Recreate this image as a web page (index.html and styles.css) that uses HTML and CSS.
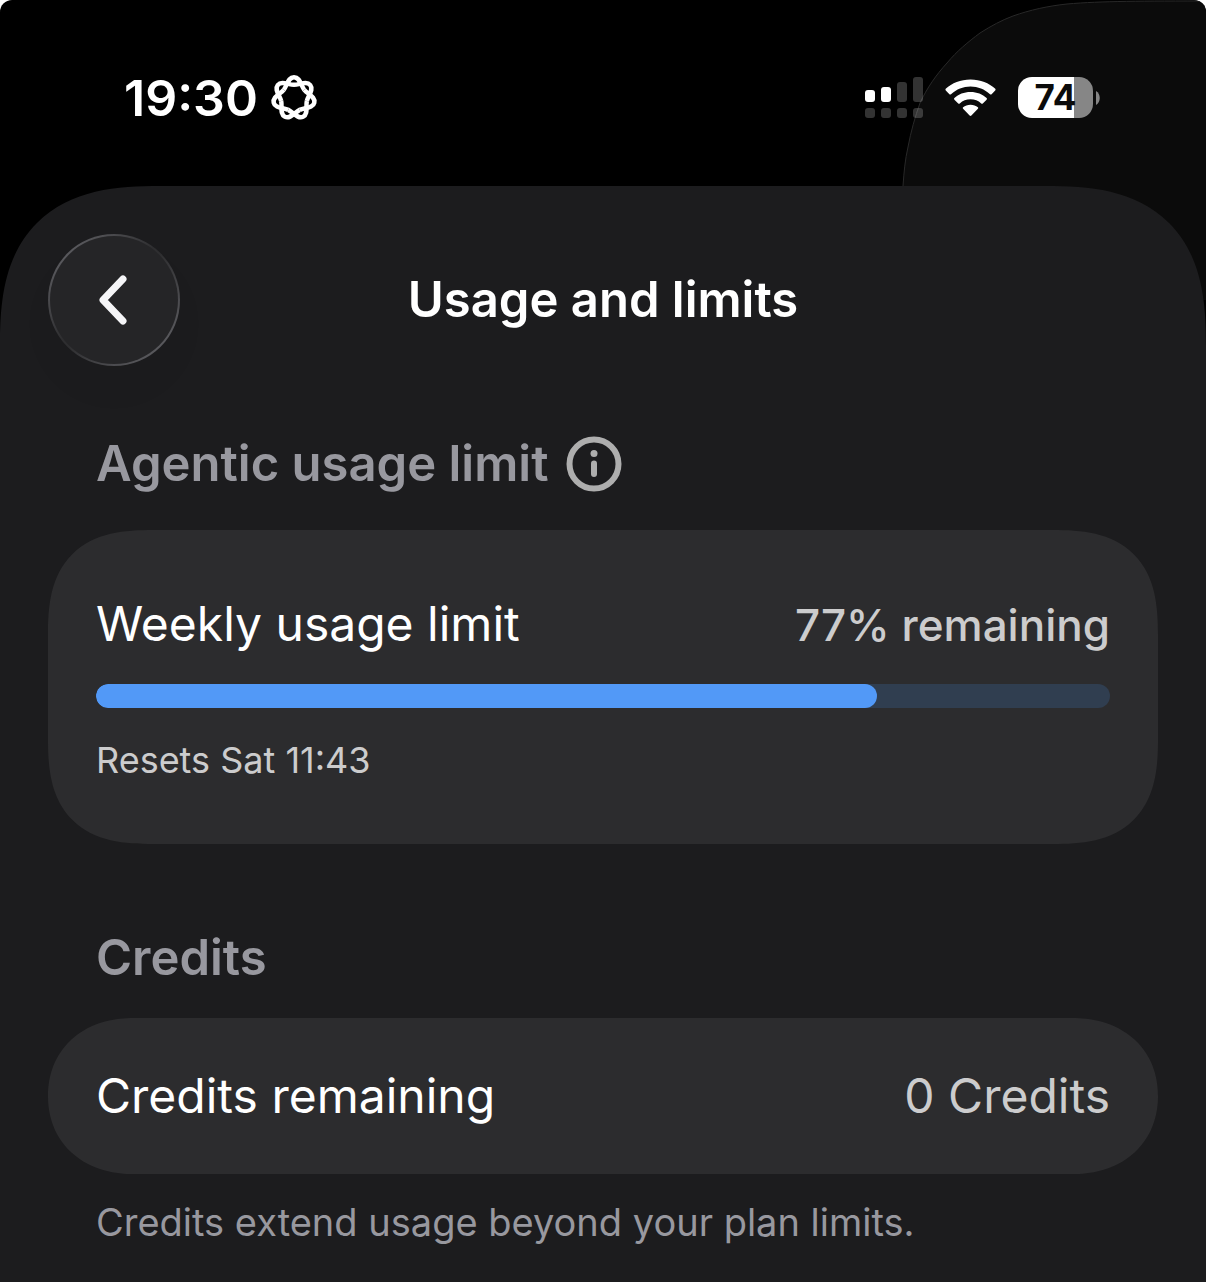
FILE: index.html
```html
<!DOCTYPE html>
<html lang="en">

<head>
    <meta charset="UTF-8">
    <meta name="viewport" content="width=device-width, initial-scale=1.0">
    <title>Usage and limits</title>
    <link rel="stylesheet" href="styles.css">
</head>

<body>
    <div class="screen">
        <div class="status-bar">
            <!-- Edge of the view behind the sheet -->
            <svg class="backdrop" viewBox="0 0 304 300" aria-hidden="true">
                <path d="M1 310V186C2 172 3 160 6 147C9 131 13 117 18 103C25 88 34 75 45 63C55 51 66 42 78 33C89 26 100 20 111 16C128 10 146 6 165 4C200 1 240 1 310 1V310Z" />
            </svg>
            <div class="status-left">
                <span class="time">19:30</span>
                <svg class="knot" viewBox="-24 -24 48 48" aria-hidden="true">
                    <defs>
                        <path id="loop" d="M-10.300 -8.200C-6.800 -12.600 -6 -20.800 0 -20.800S6.800 -12.600 10.300 -8.200" />
                    </defs>
                    <use href="#loop" />
                    <use href="#loop" transform="rotate(51.43)" />
                    <use href="#loop" transform="rotate(102.86)" />
                    <use href="#loop" transform="rotate(154.29)" />
                    <use href="#loop" transform="rotate(205.71)" />
                    <use href="#loop" transform="rotate(257.14)" />
                    <use href="#loop" transform="rotate(308.57)" />
                </svg>
            </div>
            <div class="status-right">
                <svg class="signal" viewBox="0 0 58 41" aria-hidden="true">
                    <g fill="#fff">
                        <rect x="0" y="13" width="10" height="12" rx="3" />
                        <rect x="16" y="10" width="10" height="15" rx="3" />
                    </g>
                    <g fill="#fff" fill-opacity=".2">
                        <rect x="32" y="5" width="10" height="20" rx="3" />
                        <rect x="48" y="0" width="10" height="25" rx="3" />
                        <rect x="0" y="31" width="10" height="10" rx="3" />
                        <rect x="16" y="31" width="10" height="10" rx="3" />
                        <rect x="32" y="31" width="10" height="10" rx="3" />
                        <rect x="48" y="31" width="10" height="10" rx="3" />
                    </g>
                </svg>
                <svg class="wifi" viewBox="0 0 51 38" aria-hidden="true">
                    <path d="M25.500 .5C35.500 .5 44 4 50.300 9.800Q51 10.700 50.200 11.500L46.600 15.200Q45.800 15.900 45 15.200C39.500 10.300 33 7.500 25.500 7.500S11.500 10.300 6 15.200Q5.200 15.900 4.400 15.200L.8 11.500Q0 10.700 .7 9.800C7 4 15.500 .5 25.500 .5Z" />
                    <path d="M25.500 13C32 13 37.500 15.300 41.600 19.100Q42.400 19.900 41.600 20.700L37.800 24.400Q37 25.100 36.200 24.400C33.300 21.800 29.700 20.300 25.500 20.300S17.700 21.800 14.800 24.400Q14 25.100 13.200 24.400L9.400 20.700Q8.600 19.900 9.400 19.100C13.500 15.300 19 13 25.500 13Z" />
                    <path d="M25.500 25.700C28.400 25.700 30.900 26.600 32.900 28.200Q33.700 29 32.900 29.800L26.400 36.500Q25.500 37.300 24.600 36.500L18.100 29.800Q17.300 29 18.100 28.200C20.100 26.600 22.600 25.700 25.500 25.700Z" />
                </svg>
                <div class="battery">
                    <span class="battery-body">74</span>
                    <svg class="battery-tip" viewBox="0 0 4 14" aria-hidden="true">
                        <path d="M0 0C5 3 5 11 0 14Z" />
                    </svg>
                </div>
            </div>
        </div>

        <main class="sheet">
            <header class="nav">
                <button type="button" class="back-btn" aria-label="Back">
                    <svg viewBox="0 0 30 50" aria-hidden="true">
                        <path d="M24 4L4 25L24 46" />
                    </svg>
                </button>
                <h1 class="title">Usage and limits</h1>
            </header>

            <section class="section">
                <div class="section-head">
                    <h2>Agentic usage limit</h2>
                    <button type="button" class="info-btn" aria-label="About the agentic usage limit">
                        <svg viewBox="0 0 56 56" aria-hidden="true">
                            <circle cx="28" cy="28" r="24.500" fill="none" stroke="currentColor" stroke-width="6" />
                            <circle cx="28" cy="17.500" r="3.500" fill="currentColor" />
                            <rect x="25" y="24.500" width="6" height="16.500" rx="3" fill="currentColor" />
                        </svg>
                    </button>
                </div>
                <div class="card usage">
                    <div class="row">
                        <label for="weekly" class="label">Weekly usage limit</label>
                        <span class="remaining">77% remaining</span>
                    </div>
                    <progress id="weekly" class="bar" value="77" max="100"></progress>
                    <p class="resets">Resets Sat 11:43</p>
                </div>
            </section>

            <section class="section">
                <div class="section-head plain">
                    <h2>Credits</h2>
                </div>
                <div class="card credits">
                    <div class="row">
                        <span class="label">Credits remaining</span>
                        <span class="value">0 Credits</span>
                    </div>
                </div>
                <p class="note">Credits extend usage beyond your plan limits.</p>
            </section>
        </main>
    </div>
</body>

</html>
```
FILE: styles.css
```css
* {
    box-sizing: border-box;
}

body {
    margin: 0;
    background-color: #fff;
    font-family: Inter, "Liberation Sans", sans-serif;
    color: #fff;
}

h1, h2, p {
    margin: 0;
}

button {
    padding: 0;
    border: none;
    background: none;
    color: inherit;
    cursor: pointer;
}

svg {
    display: block;
}

.screen {
    position: relative;
    display: flex;
    flex-direction: column;
    min-height: 100vh;
    background-color: #000;
    border-radius: 12px 12px 0 0;
    overflow: hidden;
}

/* Status bar */
.status-bar {
    display: flex;
    justify-content: space-between;
    align-items: center;
    height: 186px;
    padding: 9px 106px 0 124px;
}

.backdrop {
    position: absolute;
    top: 0;
    right: 0;
    width: 304px;
    height: 300px;
    fill: #0b0b0b;
    stroke: #282828;
    stroke-width: 1;
}

.status-left,
.status-right {
    position: relative;
    display: flex;
    align-items: center;
}

.status-left {
    gap: 12px;
}

.status-right {
    gap: 22px;
}

.time {
    font-size: 50px;
    font-weight: 600;
    line-height: 60px;
}

.knot {
    width: 48px;
    height: 48px;
    fill: none;
    stroke: #fff;
    stroke-width: 4.500;
}

.signal {
    width: 58px;
    height: 41px;
}

.wifi {
    width: 51px;
    height: 38px;
    fill: #fff;
}

.battery {
    display: flex;
    align-items: center;
    gap: 3px;
}

.battery-body {
    width: 75px;
    height: 41px;
    border-radius: 14px;
    background: linear-gradient(to right, #fff 75%, #868686 75%);
    color: #0b0b0b;
    font-size: 35px;
    font-weight: 700;
    line-height: 41px;
    text-align: center;
}

.battery-tip {
    width: 4px;
    height: 14px;
    fill: #868686;
}

/* Sheet */
.sheet {
    position: relative;
    flex: 1;
    padding: 48px 48px 36px;
    background-color: #1c1c1e;
    border-radius: 124px 124px 0 0;
}

.nav {
    display: grid;
    grid-template-columns: 132px 1fr 132px;
    align-items: center;
}

.back-btn {
    display: flex;
    justify-content: center;
    align-items: center;
    width: 132px;
    height: 132px;
    border: 2px solid transparent;
    border-radius: 50%;
    background:
        linear-gradient(#252527, #252527) padding-box,
        linear-gradient(135deg, #58585c 15%, #2e2e30 45%, #2e2e30 50%, #58585c 85%) border-box;
    box-shadow: 0 24px 32px rgba(0, 0, 0, 0.04);
}

.back-btn svg {
    width: 30px;
    height: 50px;
    fill: none;
    stroke: #f5f5f7;
    stroke-width: 7;
    stroke-linecap: round;
    stroke-linejoin: round;
}

.title {
    font-size: 49px;
    font-weight: 600;
    line-height: 60px;
    text-align: center;
}

.section-head {
    display: flex;
    align-items: center;
    gap: 18px;
    padding: 68px 48px 36px;
}

.section-head.plain {
    padding-bottom: 30px;
}

.section-head h2 {
    color: #98989f;
    font-size: 49px;
    font-weight: 600;
    line-height: 60px;
}

.info-btn svg {
    width: 56px;
    height: 56px;
    color: #aeaeae;
}

.section + .section {
    padding-top: 16px;
}

/* Cards */
.card {
    background-color: #2c2c2e;
    border-radius: 80px;
}

.usage {
    padding: 64px 48px 62px;
}

.credits {
    padding: 48px;
}

.row {
    display: flex;
    justify-content: space-between;
    align-items: baseline;
}

.label,
.value {
    font-size: 48px;
    line-height: 60px;
}

.value {
    color: #cccccd;
}

.remaining {
    color: #cccccd;
    font-size: 44px;
    font-weight: 500;
}

.bar {
    display: block;
    width: 100%;
    height: 24px;
    margin: 30px 0;
    border: none;
    border-radius: 12px;
    overflow: hidden;
    appearance: none;
    -webkit-appearance: none;
    background-color: #303e50;
}

.bar::-webkit-progress-bar {
    background-color: #303e50;
}

.bar::-webkit-progress-value {
    background-color: #5299f7;
    border-radius: 12px;
}

.resets {
    color: #cccccd;
    font-size: 36px;
    line-height: 44px;
}

.note {
    padding: 24px 48px 0;
    color: #98989f;
    font-size: 38px;
    line-height: 48px;
}

/* Smoother corners where the browser can draw them */
@supports (corner-shape: squircle) {
    .sheet {
        border-radius: 160px 160px 0 0;
        corner-shape: superellipse(1.4);
    }

    .usage {
        border-radius: 105px;
        corner-shape: superellipse(1.4);
    }

    .credits {
        border-radius: 85px / 78px;
        corner-shape: superellipse(1.1);
    }
}
```
